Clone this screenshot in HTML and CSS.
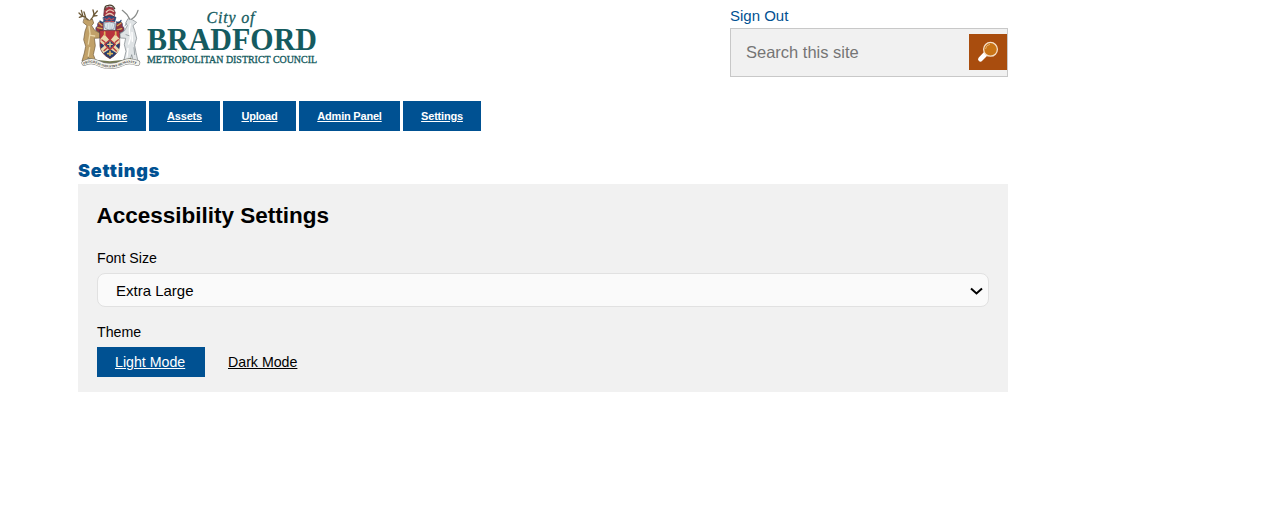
FILE: index.html
```html
<!DOCTYPE html>
<html lang="en">
<head>
<meta charset="utf-8">
<title>Settings</title>
<link rel="stylesheet" href="styles.css">
</head>
<body>
<div class="page">
  <header class="header">
    <svg class="logo" width="242" height="70" viewBox="0 0 242 70" role="img" aria-label="City of Bradford Metropolitan District Council">
      <g transform="translate(-4 -2) scale(.33333)" fill="none" stroke-linecap="round" stroke-linejoin="round">
        <!-- mantling and crest -->
        <path d="M88 69C78 60 68 67 71 78C61 83 65 96 76 98L88 90ZM127 69C139 60 148 67 145 78C155 84 150 97 139 98L125 90Z" fill="#8e3440" stroke="#394b75" stroke-width="2"/>
        <path d="M75 69L84 77M71 83L84 86M141 69L130 77M143 86L130 90" stroke="#d6aa54" stroke-width="4"/>
        <path d="M89 66Q82 70 78 63M127 66Q138 71 141 61" stroke="#27466f" stroke-width="4"/>
        <path d="M91 27L89 47L101 57L120 51L124 38L117 23L104 20Z" fill="#a6333f" stroke="#5f3541" stroke-width="2"/>
        <path d="M93 28Q91 17 103 16Q116 13 122 26" stroke="#49402d" stroke-width="4"/>
        <path d="M97 36Q106 24 118 34M96 46Q108 35 118 46" stroke="#e8c8b4" stroke-width="4"/>
        <path d="M88 52Q106 43 126 52L122 66H91Z" fill="#304d80" stroke="#273959" stroke-width="2"/>
        <path d="M93 56L99 60L105 54L112 60L119 56M95 65H119" stroke="#b94955" stroke-width="4"/>
        <path d="M91 69Q106 62 123 70L120 87Q106 95 94 86Z" fill="#dce7ed" stroke="#72818e" stroke-width="2"/>
        <path d="M101 72L99 85M108 71V88M116 74L112 87" stroke="#b4c0c8" stroke-width="2"/>
        <!-- stag supporter -->
        <path d="M31 56L47 61L55 57L59 69L53 77L62 91L79 100L77 114L61 115L64 137L58 164L66 184L50 187L43 172L38 186L24 183L31 159L35 139L29 119L33 94L39 77L28 68Z" fill="#c1a169" stroke="#705938" stroke-width="2"/>
        <path d="M42 59Q32 49 24 48L15 39M27 48L16 52M26 46L22 31M35 52L30 36M51 58Q58 52 60 42L57 30M61 44L70 33M59 48L69 47" stroke="#6d5a38" stroke-width="4"/>
        <path d="M45 79L48 101L43 132M50 106L62 108M47 143L43 168" stroke="#ead8aa" stroke-width="4"/>
        <!-- goat supporter -->
        <path d="M174 59L162 56L155 69L160 77L151 93L137 102L139 114L155 115L151 134L156 154L149 183L168 185L173 164L179 187L192 184L186 157L182 136L188 115L182 91L177 77L187 68Z" fill="#dfe3e5" stroke="#777f84" stroke-width="2"/>
        <path d="M167 57Q160 42 145 31M173 57Q187 49 192 31" stroke="#888b89" stroke-width="4"/>
        <path d="M169 72L166 90L169 115L164 132M174 97L175 124M162 145L159 171" stroke="#fff" stroke-width="4"/>
        <path d="M156 104L165 107M180 143L182 164M157 70L153 78" stroke="#9ba3a7" stroke-width="3"/>
        <!-- shield -->
        <path d="M78 91H137V136Q136 160 108 176Q80 162 78 139Z" fill="#b8333d" stroke="#4a3039" stroke-width="2"/>
        <path d="M79 132H137Q136 160 108 175Q80 160 79 132Z" fill="#263e70"/>
        <path d="M79 117L91 103L108 122L124 103L137 117V127L125 137L137 149L128 160L108 147L88 160L80 147L91 137L79 126Z" fill="#ead9ac"/>
        <path d="M108 119L124 133L108 149L92 133Z" fill="#263e70" stroke="#b83a3d" stroke-width="4"/>
        <path d="M92 96V105M125 96V105M101 161H115M108 154V166" stroke="#dfb65d" stroke-width="5"/>
        <path d="M101 133H115M108 126V141" stroke="#f0d58c" stroke-width="4"/>
        <path d="M84 120L93 127M124 127L133 119M90 152L100 143M117 143L127 153" stroke="#b83a3d" stroke-width="4"/>
        <!-- motto ribbon -->
        <path d="M45 178Q108 196 170 178" stroke="#747a52" stroke-width="7"/>
        <path d="M31 189Q50 180 66 187Q108 210 151 187Q167 180 190 189" stroke="#777" stroke-width="17"/>
        <path d="M31 189Q50 180 66 187Q108 210 151 187Q167 180 190 189" stroke="#f6f5ee" stroke-width="14"/>
        <path id="motto-line" d="M29 194Q50 184 66 191Q108 214 151 191Q167 184 194 195"/>
        <text class="motto"><textPath href="#motto-line" textLength="164" lengthAdjust="spacingAndGlyphs">PROGRESS·INDUSTRY·HUMANITY</textPath></text>
      </g>
      <g class="wordmark">
        <text class="city" x="128.500" y="21" textLength="48" lengthAdjust="spacing">City of</text>
        <text class="bradford" x="69" y="48" textLength="170" lengthAdjust="spacingAndGlyphs">BRADFORD</text>
        <text class="council" x="69" y="60.700" textLength="170" lengthAdjust="spacingAndGlyphs">METROPOLITAN DISTRICT COUNCIL</text>
      </g>
    </svg>
    <div class="tools">
      <a class="signout">Sign Out</a>
      <form class="search">
        <input class="search-input" type="text" placeholder="Search this site" aria-label="Search this site">
        <button class="search-button" type="button" aria-label="Search">
          <svg width="38" height="36" viewBox="0 0 38 36">
            <path d="M16.500 20L11.500 25.200" stroke="#fff" stroke-width="4.800" stroke-linecap="round"/>
            <circle cx="21.500" cy="15.300" r="6.900" fill="#c97416" stroke="#f5dfc8" stroke-width="1.300"/>
            <path d="M16.500 15Q17 11 21 10.300" fill="none" stroke="#e2ad70" stroke-width="1"/>
          </svg>
        </button>
      </form>
    </div>
  </header>
  <nav class="nav">
    <a class="nav-link nav-home">Home</a>
    <a class="nav-link nav-assets">Assets</a>
    <a class="nav-link nav-upload">Upload</a>
    <a class="nav-link nav-admin">Admin Panel</a>
    <a class="nav-link nav-settings">Settings</a>
  </nav>
  <main>
    <h1 class="title">Settings</h1>
    <section class="panel">
      <h2 class="heading">Accessibility Settings</h2>
      <div class="label">Font Size</div>
      <div class="select">
        <span>Extra Large</span>
        <svg width="14" height="10" viewBox="0 0 14 10"><path d="M2 2.500L7.500 7.500L13 2.500" fill="none" stroke="#000" stroke-width="2"/></svg>
      </div>
      <div class="label label-theme">Theme</div>
      <div class="modes">
        <a class="mode mode-active">Light Mode</a>
        <a class="mode">Dark Mode</a>
      </div>
    </section>
  </main>
</div>
</body>
</html>
```
FILE: styles.css
```css
* { box-sizing: border-box; }
body { margin: 0; background: #fff; color: #000; font-family: "Liberation Sans", Arial, sans-serif; }
.page { width: 930px; margin-left: 78px; }
.header { display: flex; justify-content: space-between; height: 101px; }
.logo { display: block; margin-top: 2px; overflow: visible; }
.motto { font: bold 10px "Liberation Serif", serif; fill: #333; }
.wordmark { fill: #155b60; font-family: "Liberation Serif", serif; }
.city { font-size: 16px; font-style: italic; stroke: #155b60; stroke-width: .3px; }
.bradford { font-size: 31px; font-weight: bold; }
.council { font-size: 11px; stroke: #155b60; stroke-width: .35px; }
.tools { width: 278px; padding-top: 7px; }
.signout { display: block; height: 21px; color: #005192; font-size: 15px; line-height: 18px; }
.search { display: flex; align-items: flex-start; height: 49px; margin: 0; border: 1px solid #c8c8c8; background: #f1f1f1; padding-top: 5px; }
.search-input { flex: 1; min-width: 0; height: 36px; border: 0; padding: 0 0 0 15px; background: transparent; font: 16.500px "Liberation Sans", Arial, sans-serif; }
.search-input::placeholder { color: #757575; }
.search-button { width: 38px; height: 36px; border: 0; padding: 0; background: #a94d0e; }
.search-button svg { display: block; }
.nav { display: flex; gap: 3px; height: 30px; }
.nav-link { background: #005192; color: #fff; font-size: 11px; font-weight: bold; line-height: 30px; letter-spacing: -.2px; text-align: center; text-decoration: underline; }
.nav-home { width: 68px; letter-spacing: 0; }
.nav-assets { width: 71px; }
.nav-upload { width: 73px; }
.nav-admin { width: 101px; }
.nav-settings { width: 78px; }
.title { height: 53px; margin: 0; padding-top: 28px; color: #005192; font: 900 18px/24px Inter, sans-serif; letter-spacing: .8px; }
.panel { height: 208px; padding: 18px 19px 0; background: #f1f1f1; }
.heading { margin: 0 0 18px -.5px; font-size: 22.500px; line-height: 28px; }
.label { height: 25px; font-size: 14.200px; line-height: 20px; }
.select { display: flex; align-items: center; justify-content: space-between; height: 34px; padding: 1px 5px 0 18px; border: 1px solid #e1e1e1; border-radius: 8px; background: #fafafa; font-size: 15px; line-height: 20px; }
.label-theme { margin-top: 15px; }
.modes { display: flex; gap: 4px; }
.mode { height: 30px; padding: 0 19px; font-size: 14.200px; line-height: 30px; text-decoration: underline; white-space: nowrap; }
.mode-active { width: 108px; padding: 0 18px; background: #005192; color: #fff; }
```
